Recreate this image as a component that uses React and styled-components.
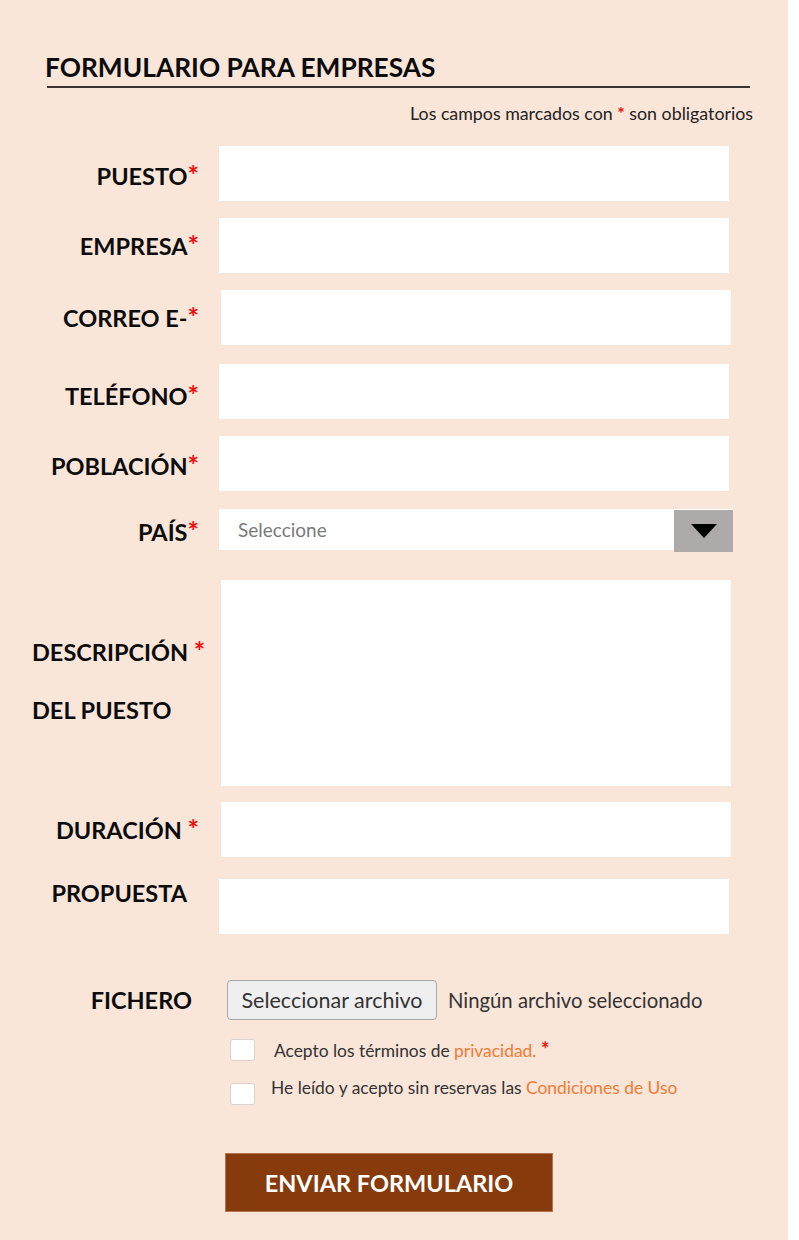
import styled, { createGlobalStyle } from 'styled-components';

const GlobalStyle = createGlobalStyle`
    html, body {
        margin: 0;
        padding: 0;
        background: #ffffff;
    }
    * {
        box-sizing: border-box;
    }
`;

const Page = styled.div`
    width: 788px;
    min-height: 1240px;
    background: #FAE5D9;
    font-family: Lato, "Open Sans", sans-serif;
    color: #111;
    padding-top: 52px;
    padding-bottom: 28px;
`;

const Title = styled.h1`
    margin: 0 0 0 45px;
    font-size: 26.3px;
    font-weight: 700;
    line-height: 30px;
    color: #0c0c0c;
`;

const Rule = styled.div`
    margin: 4px 0 0 47px;
    width: 703px;
    border-top: 2px solid #3a3433;
`;

const Note = styled.p`
    margin: 14px 0 0 0;
    width: 753px;
    text-align: right;
    font-size: 17.8px;
    line-height: 22px;
    color: #222;
`;

const Star = styled.span`
    color: #f20d0d;
    font-size: ${p => (p.$big ? '1.15em' : '1em')};
    font-weight: 700;
`;

const Row = styled.div`
    display: flex;
    align-items: center;
    margin-top: ${p => p.$top}px;
`;

const Label = styled.div`
    width: ${p => 219 + (p.$shift || 0)}px;
    padding-right: ${p => p.$pad ?? 20}px;
    padding-top: ${p => p.$dy || 0}px;
    align-self: ${p => p.$self || 'auto'};
    text-align: right;
    font-size: 23.5px;
    line-height: 29px;
    font-weight: 700;
    color: #0c0c0c;
    white-space: nowrap;
`;

const BlockLabel = styled.div`
    width: 221px;
    padding-left: 32px;
    padding-bottom: 6px;
    font-size: 23.5px;
    font-weight: 700;
    line-height: 58px;
    color: #0c0c0c;
    white-space: nowrap;
`;

const TextInput = styled.input`
    display: block;
    width: 510px;
    height: 55px;
    border: none;
    background: #fff;
    outline: none;
`;

const TextArea = styled.textarea`
    display: block;
    width: 510px;
    height: 206px;
    border: none;
    background: #fff;
    resize: none;
    outline: none;
`;

const Select = styled.div`
    display: flex;
    width: 514px;
    height: 41px;
    background: #fff;
`;

const SelectText = styled.div`
    flex: 1;
    padding-left: 19px;
    font-size: 19px;
    line-height: 41px;
    color: #7a7a7a;
`;

const SelectArrow = styled.div`
    width: 59px;
    height: 42px;
    margin-top: 1px;
    background: #aeaaa9;
    display: flex;
    align-items: center;
    justify-content: center;
`;

const FileButton = styled.button`
    height: 40px;
    width: 210px;
    padding: 0;
    margin-left: 8px;
    background: #efefef;
    border: 1px solid #a9a9a9;
    border-radius: 4px;
    font-family: Lato, "Open Sans", sans-serif;
    font-size: 21.5px;
    color: #333;
`;

const FileText = styled.span`
    margin-left: 11px;
    font-size: 20.3px;
    color: #333;
`;

const CheckRow = styled.div`
    display: flex;
    align-items: ${p => p.$align || 'center'};
    margin-top: ${p => p.$top}px;
    padding-left: 230px;
`;

const Box = styled.span`
    width: 25px;
    height: 22px;
    background: #fff;
    border: 1px solid #dcd3ce;
    border-radius: 3px;
    flex: none;
`;

const CheckText = styled.span`
    margin-left: ${p => p.$gap}px;
    font-size: 17.4px;
    line-height: 22px;
    color: #333;
    padding-bottom: ${p => p.$lift || 0}px;
`;

const Link = styled.span`
    color: #f07b34;
`;

const Submit = styled.button`
    display: block;
    margin: 48px 0 0 225px;
    width: 328px;
    height: 59px;
    background: #873b0c;
    border: 1px solid #b5744d;
    color: #fff;
    font-family: Lato, "Open Sans", sans-serif;
    font-size: 23.5px;
    font-weight: 700;
`;

const fields = [
    { label: 'PUESTO', top: 22, dy: 4 },
    { label: 'EMPRESA', top: 17, dy: 0 },
    { label: 'CORREO E-', top: 17, dy: 0, shift: 2, pad: 22 },
    { label: 'TELÉFONO', top: 19, dy: 8 },
    { label: 'POBLACIÓN', top: 17, dy: 4 },
];

function App() {
    return (
        <>
            <GlobalStyle />
            <Page>
                <Title>FORMULARIO PARA EMPRESAS</Title>
                <Rule />
                <Note>
                    Los campos marcados con <Star>*</Star> son obligatorios
                </Note>

                {fields.map(f => (
                    <Row key={f.label} $top={f.top}>
                        <Label $shift={f.shift} $pad={f.pad} $dy={f.dy}>
                            {f.label}<Star $big>*</Star>
                        </Label>
                        <TextInput type="text" />
                    </Row>
                ))}

                <Row $top={18}>
                    <Label $dy={4}>PAÍS<Star $big>*</Star></Label>
                    <Select>
                        <SelectText>Seleccione</SelectText>
                        <SelectArrow>
                            <svg width="26" height="14" viewBox="0 0 26 14">
                                <polygon points="0,0 26,0 13,14" fill="#000" />
                            </svg>
                        </SelectArrow>
                    </Select>
                </Row>

                <Row $top={30}>
                    <BlockLabel>
                        DESCRIPCIÓN <Star $big>*</Star>
                        <br />
                        DEL PUESTO
                    </BlockLabel>
                    <TextArea />
                </Row>

                <Row $top={16}>
                    <Label $shift={2} $pad={22}>DURACIÓN <Star $big>*</Star></Label>
                    <TextInput type="text" />
                </Row>

                <Row $top={22}>
                    <Label $pad={32} $self="flex-start">PROPUESTA</Label>
                    <TextInput type="text" />
                </Row>

                <Row $top={46}>
                    <Label $pad={27}>FICHERO</Label>
                    <FileButton type="button">Seleccionar archivo</FileButton>
                    <FileText>Ningún archivo seleccionado</FileText>
                </Row>

                <CheckRow $top={18}>
                    <Box />
                    <CheckText $gap={19}>
                        Acepto los términos de <Link>privacidad.</Link> <Star $big>*</Star>
                    </CheckText>
                </CheckRow>

                <CheckRow $top={15} $align="flex-end">
                    <Box />
                    <CheckText $gap={16} $lift={6}>
                        He leído y acepto sin reservas las <Link>Condiciones de Uso</Link>
                    </CheckText>
                </CheckRow>

                <Submit type="button">ENVIAR FORMULARIO</Submit>
            </Page>
        </>
    );
}

export default App;
